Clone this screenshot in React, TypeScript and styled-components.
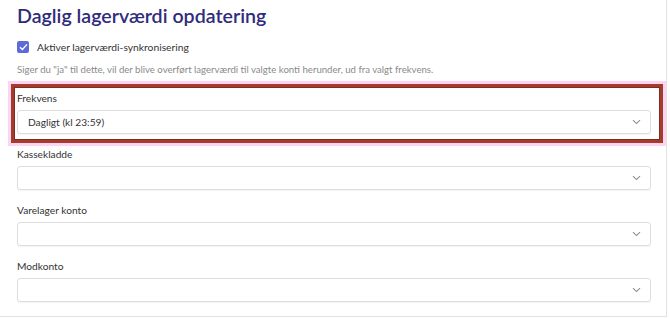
import styled, { createGlobalStyle } from "styled-components";
import React from "react";

const GlobalStyle = createGlobalStyle`
  body {
    margin: 0;
    background: #ffffff;
    font-family: Lato, "Liberation Sans", sans-serif;
  }
`;

const Card = styled.section`
  width: 667px;
  height: 317px;
  background: #fff;
  border-right: 1px solid #e2e2e2;
  border-bottom: 1px solid #e2e2e2;
  padding: 3px 16px 0 17px;
  box-sizing: border-box;
`;

const Title = styled.h2`
  margin: 0;
  font-size: 19.6px;
  line-height: 26px;
  font-weight: 600;
  color: #302c7c;
`;

const CheckRow = styled.label`
  display: flex;
  align-items: center;
  gap: 8px;
  margin-top: 11px;
  font-size: 10.3px;
  color: #333;
  height: 14px;
`;

const Box = styled.span`
  width: 12px;
  height: 12px;
  border-radius: 2px;
  background: #5d6bd8;
  display: flex;
  align-items: center;
  justify-content: center;
`;

const Hint = styled.p`
  margin: 9px 0 0;
  font-size: 9.6px;
  line-height: 14px;
  color: #8a8a8a;
`;

const Fields = styled.div`
  display: flex;
  flex-direction: column;
  gap: 13px;
  margin-top: 14px;
  width: 634px;
`;

const Field = styled.div<{ $marked?: boolean }>`
  position: relative;
  display: flex;
  flex-direction: column;
  gap: 5px;

  ${(p) =>
    p.$marked &&
    `
    &::after {
      content: "";
      position: absolute;
      left: -6px;
      right: -12px;
      top: -7px;
      bottom: -9px;
      border: 3px solid #a63a2b;
      box-shadow: 0 0 0 3px #fcd5f5, inset 0 0 0 1px #7e2b20;
      pointer-events: none;
    }
  `}
`;

const Label = styled.span`
  font-size: 10.2px;
  line-height: 14px;
  color: #333;
`;

const Select = styled.div`
  height: 24px;
  border: 1px solid #dedede;
  border-radius: 3px;
  box-shadow: 0 1px 1px rgba(0, 0, 0, 0.05);
  box-sizing: border-box;
  display: flex;
  align-items: center;
  justify-content: space-between;
  padding: 0 9px 0 10px;
  font-size: 10.2px;
  color: #333;
  background: #fff;
`;

const Chevron = () => (
  <svg width="9" height="6" viewBox="0 0 9 6">
    <path d="M1 1.2 L4.5 4.6 L8 1.2" fill="none" stroke="#8d8d8d" strokeWidth="1.1" />
  </svg>
);

const fields = [
  { label: "Frekvens", value: "Dagligt (kl 23:59)", marked: true },
  { label: "Kassekladde", value: "" },
  { label: "Varelager konto", value: "" },
  { label: "Modkonto", value: "" },
];

export default function App() {
  return (
    <>
      <GlobalStyle />
      <Card>
        <Title>Daglig lagerværdi opdatering</Title>
        <CheckRow>
          <Box>
            <svg width="9" height="8" viewBox="0 0 9 8">
              <path d="M1 4.2 L3.4 6.4 L8 1.4" fill="none" stroke="#fff" strokeWidth="1.4" />
            </svg>
          </Box>
          Aktiver lagerværdi-synkronisering
        </CheckRow>
        <Hint>
          Siger du "ja" til dette, vil der blive overført lagerværdi til valgte konti herunder, ud fra
          valgt frekvens.
        </Hint>
        <Fields>
          {fields.map((f) => (
            <Field key={f.label} $marked={f.marked}>
              <Label>{f.label}</Label>
              <Select>
                <span>{f.value}</span>
                <Chevron />
              </Select>
            </Field>
          ))}
        </Fields>
      </Card>
    </>
  );
}
